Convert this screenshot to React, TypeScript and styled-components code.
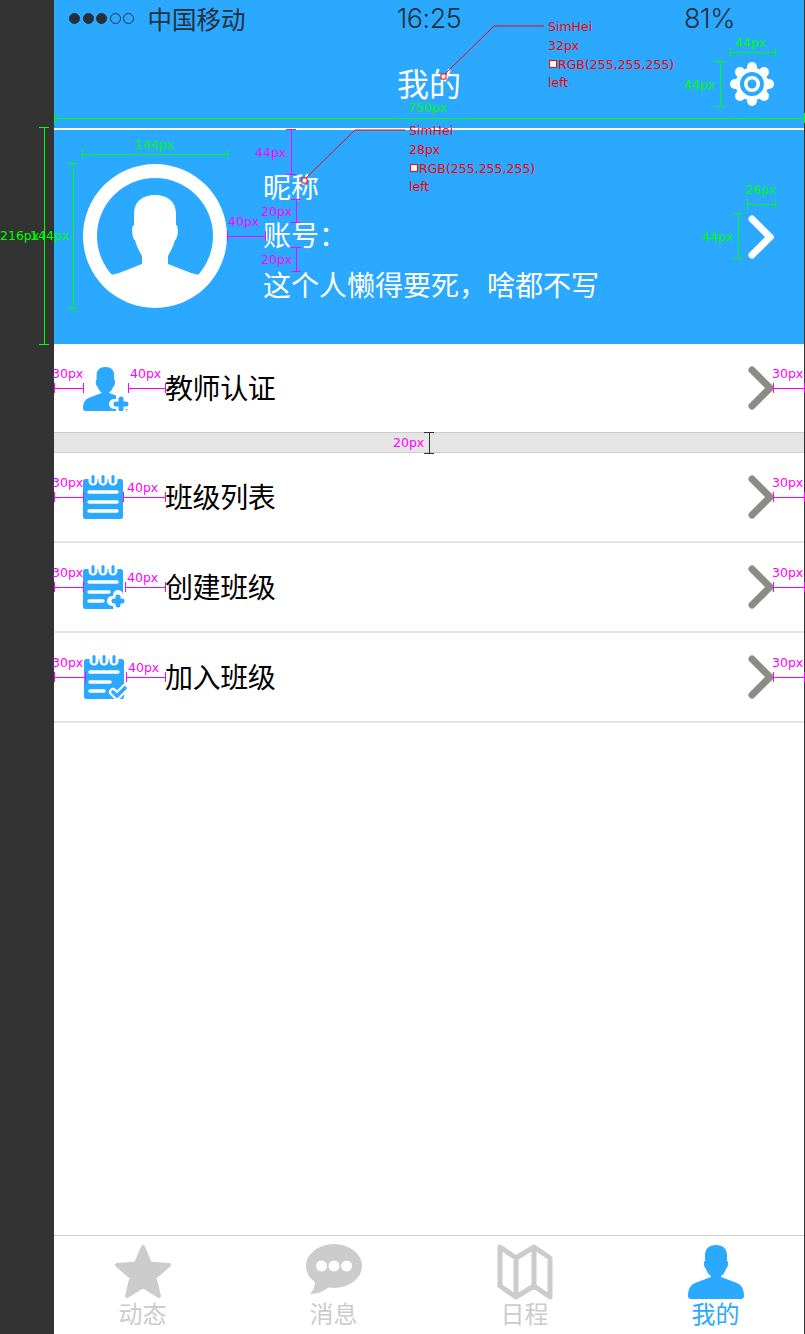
import React from "react";
import styled, { createGlobalStyle } from "styled-components";

const BLUE = "#2ba8ff";
const GRAY = "#cccccc";

const GlobalStyle = createGlobalStyle`
  html, body {
    margin: 0;
    padding: 0;
    background: #333333;
  }
  body {
    font-family: "Noto Sans CJK SC", "Liberation Sans", sans-serif;
  }
`;

const Page = styled.div`
  position: relative;
  display: flex;
  width: 805px;
  height: 1334px;
  overflow: hidden;
  background: #333333;
`;

const Phone = styled.main`
  display: flex;
  flex-direction: column;
  width: 750px;
  height: 1334px;
  margin-left: 54px;
  background: #ffffff;
`;

const Header = styled.header`
  display: flex;
  flex-direction: column;
  height: 344px;
  background: ${BLUE};
  color: #ffffff;
`;

const StatusBar = styled.div`
  display: grid;
  grid-template-columns: 1fr auto 1fr;
  align-items: center;
  height: 40px;
  padding: 0 15px 4px;
  box-sizing: border-box;
  color: #24303a;
`;

const Carrier = styled.div`
  display: flex;
  align-items: center;
  gap: 2.5px;
  font-size: 24.5px;
  white-space: nowrap;
`;

const Dot = styled.span<{ $filled?: boolean }>`
  box-sizing: border-box;
  width: 11px;
  height: 11px;
  border-radius: 50%;
  border: 1px solid #24303a;
  background: ${(p) => (p.$filled ? "#24303a" : "transparent")};
`;

const CarrierName = styled.span`
  margin-left: 11px;
`;

const Clock = styled.div`
  font-family: Inter, "Liberation Sans", sans-serif;
  font-size: 27px;
  font-weight: 300;
  letter-spacing: -0.5px;
  text-align: center;
`;

const Battery = styled.div`
  font-family: Inter, "Liberation Sans", sans-serif;
  font-size: 27px;
  font-weight: 300;
  letter-spacing: -0.5px;
  text-align: right;
  padding-right: 54px;
`;

const NavBar = styled.div`
  position: relative;
  display: flex;
  align-items: center;
  justify-content: center;
  height: 88px;
`;

const Title = styled.h1`
  margin: 0 0 4px;
  font-size: 32px;
  font-weight: 400;
  line-height: 44px;
`;

const SettingsButton = styled.div`
  position: absolute;
  right: 30px;
  top: 22px;
  width: 44px;
  height: 44px;
`;

const HeaderRule = styled.div`
  height: 2px;
  background: #ffffff;
`;

const Profile = styled.section`
  display: flex;
  align-items: center;
  flex: 1;
  padding: 0 30px 0 29px;
`;

const Avatar = styled.svg`
  flex: none;
  width: 144px;
  height: 144px;
  margin-bottom: 2px;
`;

const ProfileText = styled.div`
  display: flex;
  flex-direction: column;
  flex: 1;
  gap: 20px;
  margin: 0 0 4px 36px;
  font-size: 28px;
  line-height: 28px;
`;

const ProfileBio = styled.span`
  margin-top: 2px;
`;

const MenuRow = styled.div`
  display: flex;
  align-items: center;
  height: 88px;
  padding: 0 30px 0 29px;
  border-bottom: 2px solid #e5e5e5;
`;

const FirstRow = styled(MenuRow)`
  border-bottom: 0;
`;

const Spacer = styled.div`
  box-sizing: border-box;
  height: 21px;
  background: #e5e5e5;
  border-top: 1px solid #cccccc;
  border-bottom: 1px solid #cccccc;
`;

const RowIconBox = styled.div<{ $inset?: number }>`
  flex: none;
  display: flex;
  width: 82px;
  box-sizing: border-box;
  padding: 1px 0 0 ${(p) => p.$inset ?? 0}px;
`;

const RowLabel = styled.span`
  flex: 1;
  margin-top: -2px;
  font-size: 28px;
  letter-spacing: -0.4px;
  color: #000000;
`;

const TabBar = styled.nav`
  display: grid;
  grid-template-columns: repeat(4, 191px);
  justify-content: center;
  margin-top: auto;
  height: 98px;
  border-top: 1px solid #cccccc;
`;

const Tab = styled.div<{ $active?: boolean }>`
  display: flex;
  flex-direction: column;
  align-items: center;
  padding-top: 8px;
  color: ${(p) => (p.$active ? BLUE : GRAY)};
`;

const TabIcon = styled.svg`
  display: block;
  width: 56px;
  height: 56px;
`;

const TabLabel = styled.span`
  font-size: 24px;
  line-height: 28px;
  margin-top: -1px;
`;

const Overlay = styled.div`
  position: absolute;
  inset: 0;
  pointer-events: none;
`;

const OverlayLines = styled.svg`
  position: absolute;
  left: 0;
  top: 0;
`;

const Note = styled.span<{ $x: number; $y: number; $color: string }>`
  position: absolute;
  left: ${(p) => p.$x}px;
  top: ${(p) => p.$y}px;
  font-family: "DejaVu Sans", sans-serif;
  font-size: 12.5px;
  line-height: 16px;
  white-space: nowrap;
  color: ${(p) => p.$color};
`;

const Swatch = styled.i`
  display: inline-block;
  box-sizing: border-box;
  width: 8px;
  height: 8px;
  margin: 0 1px 1px 1px;
  background: #ffffff;
  border: 1px solid #ff0000;
`;

const ChevronIcon = styled.svg`
  flex: none;
  width: 26px;
  height: 44px;
`;

const Chevron = ({ color }: { color: string }) => (
  <ChevronIcon viewBox="0 0 26 44">
    <path d="M4 4 L22 22 L4 40" fill="none" stroke={color} strokeWidth="7" strokeLinecap="round" strokeLinejoin="miter" />
  </ChevronIcon>
);

const Gear = () => {
  const lobes = [0, 45, 90, 135, 180, 225, 270, 315];
  return (
    <svg width="44" height="44" viewBox="0 0 44 44">
      <circle cx="22" cy="22" r="16.5" fill="#fff" />
      {lobes.map((a) => (
        <circle
          key={a}
          cx={22 + 17 * Math.cos((a * Math.PI) / 180)}
          cy={22 + 17 * Math.sin((a * Math.PI) / 180)}
          r="5"
          fill="#fff"
        />
      ))}
      <circle cx="22" cy="22" r="10" fill="none" stroke={BLUE} strokeWidth="4" />
      <circle cx="22" cy="22" r="4.5" fill={BLUE} />
    </svg>
  );
};

const BUST =
  "M28 0 C21 0 17 4 17 10 L17 16 C15 16 16 23 18 24 C19 27 21 30 23 31 L23 32 C18 34 12 36 7 38 C2 40 0 45 0 51 Q0 54 3 54 L53 54 Q56 54 56 51 C56 45 54 40 49 38 C44 36 38 34 33 32 L33 31 C35 30 37 27 38 24 C40 23 41 16 39 16 L39 10 C39 4 35 0 28 0 Z";

const TeacherIcon = () => (
  <svg width="46" height="44" viewBox="0 0 46 44">
    <g transform="scale(0.8 0.815)">
      <path d={BUST} fill={BLUE} />
    </g>
    <path d="M38 30 V44 M31 37 H45" stroke="#fff" strokeWidth="10" strokeLinecap="round" />
    <path d="M38 32 V42 M33 37 H43" stroke={BLUE} strokeWidth="5" strokeLinecap="round" />
  </svg>
);

type NotebookProps = { short?: boolean; badge?: "plus" | "check" };

const NotebookIcon = ({ short, badge }: NotebookProps) => (
  <svg width="46" height="46" viewBox="0 0 46 46">
    <rect x="0" y="4" width="40" height="40" rx="2.5" fill={BLUE} />
    {[8, 18, 28].map((x) => (
      <g key={x}>
        <path d={`M${x} 3 V6 a2 2 0 0 0 4 0 V3`} fill="none" stroke="#fff" strokeWidth="5" strokeLinecap="round" />
        <path d={`M${x + 2} 1.5 V7`} stroke={BLUE} strokeWidth="3" strokeLinecap="round" />
      </g>
    ))}
    <path d="M6 17 H34" stroke="#fff" strokeWidth="3.4" strokeLinecap="round" />
    <path d={`M6 27 H${short ? 26 : 34}`} stroke="#fff" strokeWidth="3.4" strokeLinecap="round" />
    <path d={`M6 36 H${short ? 20 : 34}`} stroke="#fff" strokeWidth="3.4" strokeLinecap="round" />
    {badge === "plus" && (
      <>
        <path d="M35 30 V42 M29 36 H41" stroke="#fff" strokeWidth="10" strokeLinecap="round" />
        <path d="M35 32 V40 M31 36 H39" stroke={BLUE} strokeWidth="5" strokeLinecap="round" />
      </>
    )}
    {badge === "check" && (
      <>
        <path d="M29 37 L33 41 L41 33" fill="none" stroke="#fff" strokeWidth="8" strokeLinecap="round" strokeLinejoin="round" />
        <path d="M29 37 L33 41 L41 33" fill="none" stroke={BLUE} strokeWidth="3.6" strokeLinecap="round" strokeLinejoin="round" />
      </>
    )}
  </svg>
);

const GREEN = "#00ff00";
const MAGENTA = "#ff00ff";
const RED = "#ff0000";

// x1 y1 x2 y2: measure lines drawn over the mockup, end caps added below
const greenMeasures = [
  [54, 118, 804, 118],
  [44, 127, 44, 344],
  [73, 163, 73, 308],
  [82, 154, 227, 154],
  [730, 52, 775, 52],
  [720, 61, 720, 106],
  [747, 204, 775, 204],
  [738, 213, 738, 258],
];

const magentaMeasures = [
  [291, 129, 291, 174],
  [296, 199, 296, 222],
  [296, 247, 296, 271],
  [227, 236, 265, 236],
  [54, 388, 83, 388],
  [128, 388, 165, 388],
  [773, 388, 804, 388],
  [54, 497, 83, 497],
  [123, 497, 165, 497],
  [773, 497, 804, 497],
  [54, 587, 83, 587],
  [125, 587, 165, 587],
  [773, 587, 804, 587],
  [54, 677, 85, 677],
  [126, 677, 165, 677],
  [773, 677, 804, 677],
];

const notes: [string, number, number, string][] = [
  ["750px", 408, 100, GREEN],
  ["216px", 0, 228, GREEN],
  ["144px", 30, 228, GREEN],
  ["144px", 135, 137, GREEN],
  ["44px", 735, 35, GREEN],
  ["44px", 684, 77, GREEN],
  ["26px", 745, 182, GREEN],
  ["44px", 702, 229, GREEN],
  ["44px", 255, 145, MAGENTA],
  ["20px", 261, 204, MAGENTA],
  ["20px", 261, 252, MAGENTA],
  ["40px", 228, 214, MAGENTA],
  ["20px", 393, 435, MAGENTA],
  ["30px", 52, 366, MAGENTA],
  ["40px", 130, 366, MAGENTA],
  ["30px", 772, 366, MAGENTA],
  ["30px", 52, 475, MAGENTA],
  ["40px", 127, 480, MAGENTA],
  ["30px", 772, 475, MAGENTA],
  ["30px", 52, 565, MAGENTA],
  ["40px", 127, 570, MAGENTA],
  ["30px", 772, 565, MAGENTA],
  ["30px", 52, 655, MAGENTA],
  ["40px", 128, 660, MAGENTA],
  ["30px", 772, 655, MAGENTA],
];

const Measure = ({ line, color }: { line: number[]; color: string }) => {
  const [x1, y1, x2, y2] = line;
  const flat = y1 === y2;
  return (
    <g stroke={color} strokeWidth="1" shapeRendering="crispEdges">
      <line x1={x1} y1={y1} x2={x2} y2={y2} />
      {flat ? (
        <>
          <line x1={x1} y1={y1 - 5} x2={x1} y2={y1 + 5} />
          <line x1={x2} y1={y1 - 5} x2={x2} y2={y1 + 5} />
        </>
      ) : (
        <>
          <line x1={x1 - 5} y1={y1} x2={x1 + 5} y2={y1} />
          <line x1={x1 - 5} y1={y2} x2={x1 + 5} y2={y2} />
        </>
      )}
    </g>
  );
};

const Annotations = () => (
  <Overlay>
    <OverlayLines width="805" height="1334">
      {greenMeasures.map((l, i) => (
        <Measure key={i} line={l} color={GREEN} />
      ))}
      {magentaMeasures.map((l, i) => (
        <Measure key={i} line={l} color={MAGENTA} />
      ))}
      <Measure line={[429, 432, 429, 453]} color="#333333" />
      <polyline points="443,76 494,26 544,26" fill="none" stroke={RED} strokeWidth="1" />
      <rect x="441" y="74" width="5" height="5" fill="#fff" stroke={RED} />
      <polyline points="304,180 355,130 405,130" fill="none" stroke={RED} strokeWidth="1" />
      <rect x="302" y="178" width="5" height="5" fill="#fff" stroke={RED} />
    </OverlayLines>
    {notes.map(([text, x, y, color], i) => (
      <Note key={i} $x={x} $y={y} $color={color}>
        {text}
      </Note>
    ))}
    <Note $x={548} $y={19} $color={RED}>SimHei</Note>
    <Note $x={548} $y={38} $color={RED}>32px</Note>
    <Note $x={548} $y={57} $color={RED}><Swatch />RGB(255,255,255)</Note>
    <Note $x={548} $y={75} $color={RED}>left</Note>
    <Note $x={409} $y={123} $color={RED}>SimHei</Note>
    <Note $x={409} $y={142} $color={RED}>28px</Note>
    <Note $x={409} $y={161} $color={RED}><Swatch />RGB(255,255,255)</Note>
    <Note $x={409} $y={179} $color={RED}>left</Note>
  </Overlay>
);

const App = () => {
  return (
    <Page>
      <GlobalStyle />
      <Phone>
        <Header>
          <StatusBar>
            <Carrier>
              <Dot $filled />
              <Dot $filled />
              <Dot $filled />
              <Dot />
              <Dot />
              <CarrierName>中国移动</CarrierName>
            </Carrier>
            <Clock>16:25</Clock>
            <Battery>81%</Battery>
          </StatusBar>
          <NavBar>
            <Title>我的</Title>
            <SettingsButton>
              <Gear />
            </SettingsButton>
          </NavBar>
          <HeaderRule />
          <Profile>
            <Avatar viewBox="0 0 144 144">
              <circle cx="72" cy="72" r="72" fill="#fff" />
              <circle cx="72" cy="72" r="58" fill={BLUE} />
              <path
                d="M72 31 C60 31 51 37 51 50 L51 61 C48 61 49 75 52 76 C54 84 57 88 59 92 L59 100 L36 109 L28 111 A58 58 0 0 0 116 111 L108 109 L85 100 L85 92 C87 88 90 84 92 76 C95 75 96 61 93 61 L93 50 C93 37 84 31 72 31 Z"
                fill="#fff"
              />
            </Avatar>
            <ProfileText>
              <span>昵称</span>
              <span>账号：</span>
              <ProfileBio>这个人懒得要死，啥都不写</ProfileBio>
            </ProfileText>
            <Chevron color="#fff" />
          </Profile>
        </Header>

        <FirstRow>
          <RowIconBox>
            <TeacherIcon />
          </RowIconBox>
          <RowLabel>教师认证</RowLabel>
          <Chevron color="#8c8c87" />
        </FirstRow>
        <Spacer />
        <MenuRow>
          <RowIconBox>
            <NotebookIcon />
          </RowIconBox>
          <RowLabel>班级列表</RowLabel>
          <Chevron color="#8c8c87" />
        </MenuRow>
        <MenuRow>
          <RowIconBox>
            <NotebookIcon short badge="plus" />
          </RowIconBox>
          <RowLabel>创建班级</RowLabel>
          <Chevron color="#8c8c87" />
        </MenuRow>
        <MenuRow>
          <RowIconBox $inset={1}>
            <NotebookIcon short badge="check" />
          </RowIconBox>
          <RowLabel>加入班级</RowLabel>
          <Chevron color="#8c8c87" />
        </MenuRow>

        <TabBar>
          <Tab>
            <TabIcon viewBox="0 0 56 56">
              <path
                d="M28 3 L35 19.5 L54 21 L39.5 33.5 L44 52 L28 42 L12 52 L16.5 33.5 L2 21 L21 19.5 Z"
                fill={GRAY}
                stroke={GRAY}
                strokeWidth="4"
                strokeLinejoin="round"
              />
            </TabIcon>
            <TabLabel>动态</TabLabel>
          </Tab>
          <Tab>
            <TabIcon viewBox="0 0 56 56">
              <ellipse cx="28" cy="22" rx="28" ry="22" fill={GRAY} />
              <path d="M9 36 C9 42 8 46 4 50 C12 50 19 47 24 42 Z" fill={GRAY} />
              <circle cx="15.5" cy="22" r="5.5" fill="#fff" />
              <circle cx="28" cy="22" r="5.5" fill="#fff" />
              <circle cx="40.5" cy="22" r="5.5" fill="#fff" />
            </TabIcon>
            <TabLabel>消息</TabLabel>
          </Tab>
          <Tab>
            <TabIcon viewBox="0 0 56 56">
              <path
                d="M3 3 L19 14 L37 3 L53 14 L53 53 L37 42 L19 53 L3 42 Z M19 14 V53 M37 3 V42"
                fill="none"
                stroke={GRAY}
                strokeWidth="5"
                strokeLinejoin="round"
              />
            </TabIcon>
            <TabLabel>日程</TabLabel>
          </Tab>
          <Tab $active>
            <TabIcon viewBox="0 0 56 56">
              <path d={BUST} fill={BLUE} transform="translate(0 1)" />
            </TabIcon>
            <TabLabel>我的</TabLabel>
          </Tab>
        </TabBar>
      </Phone>
      <Annotations />
    </Page>
  );
};

export default App;
